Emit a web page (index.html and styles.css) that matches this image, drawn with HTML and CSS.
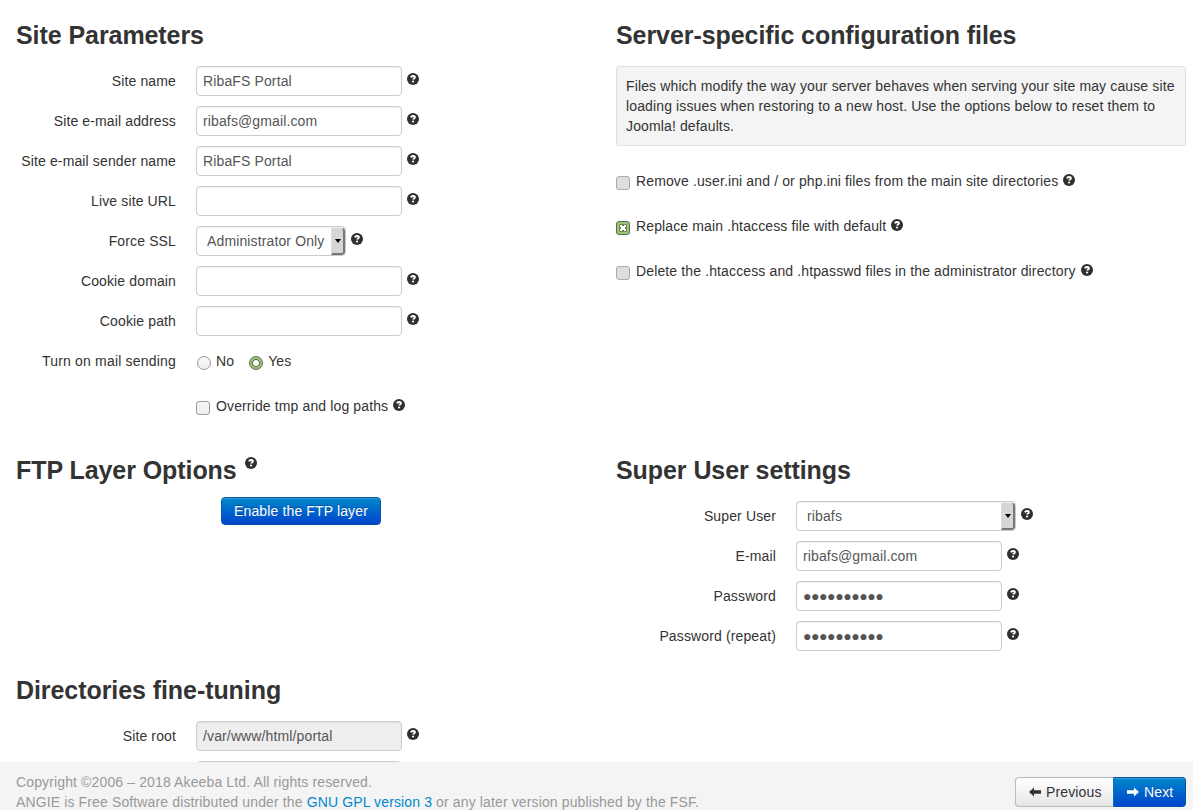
FILE: index.html
```html
<!DOCTYPE html>
<html lang="en">
<head>
<meta charset="utf-8">
<title>Site Parameters</title>
<link rel="stylesheet" href="styles.css">
</head>
<body>
<svg class="defs" aria-hidden="true">
  <symbol id="help" viewBox="0 0 12 12">
    <circle cx="6" cy="6" r="6" fill="#2f2f2f"/>
    <path d="M3.9 4.4C4.3 3.4 5 3 6 3c1.2 0 1.9.5 1.9 1.3 0 1.1-1.7 1.2-1.7 2.3" fill="none" stroke="#fff" stroke-width="1.9"/>
    <rect x="5" y="7.7" width="2.1" height="1.6" fill="#fff"/>
  </symbol>
</svg>
<main class="page">
  <section class="site">
    <h3>Site Parameters</h3>
    <div class="row"><label>Site name</label><div class="input">RibaFS Portal</div><svg class="help"><use href="#help"/></svg></div>
    <div class="row"><label>Site e-mail address</label><div class="input">ribafs@gmail.com</div><svg class="help"><use href="#help"/></svg></div>
    <div class="row"><label>Site e-mail sender name</label><div class="input">RibaFS Portal</div><svg class="help"><use href="#help"/></svg></div>
    <div class="row"><label>Live site URL</label><div class="input"></div><svg class="help"><use href="#help"/></svg></div>
    <div class="row"><label>Force SSL</label><div class="select ssl"><span>Administrator Only</span><i class="arrow"></i></div><svg class="help"><use href="#help"/></svg></div>
    <div class="row"><label>Cookie domain</label><div class="input"></div><svg class="help"><use href="#help"/></svg></div>
    <div class="row"><label>Cookie path</label><div class="input"></div><svg class="help"><use href="#help"/></svg></div>
    <div class="row"><label class="mail">Turn on mail sending</label>
      <div class="choice"><i class="radio"></i><span class="no">No</span><i class="radio on"></i><span>Yes</span></div>
    </div>
    <div class="row override"><div class="choice"><i class="check"></i><span>Override tmp and log paths</span><svg class="help"><use href="#help"/></svg></div></div>
  </section>
  <section class="server">
    <h3>Server-specific configuration files</h3>
    <p class="well">Files which modify the way your server behaves when serving your site may cause site<br>loading issues when restoring to a new host. Use the options below to reset them to<br>Joomla! defaults.</p>
    <div class="choice"><i class="check off"></i><span>Remove .user.ini and / or php.ini files from the main site directories</span><svg class="help"><use href="#help"/></svg></div>
    <div class="choice"><i class="check on"><svg viewBox="0 0 14 14"><path d="M3.5 3.5h7v7h-7z" fill="#fff" stroke="#6c8a55"/><path d="M6 4h2v1H6zM6 9h2v1H6zM4 6h1v2H4zM9 6h1v2H9z" fill="#5f7d4a"/></svg></i><span>Replace main .htaccess file with default</span><svg class="help"><use href="#help"/></svg></div>
    <div class="choice"><i class="check off"></i><span>Delete the .htaccess and .htpasswd files in the administrator directory</span><svg class="help"><use href="#help"/></svg></div>
  </section>
  <section>
    <h3 class="h-ftp"><span>FTP Layer Options</span><svg class="help"><use href="#help"/></svg></h3>
    <button class="enable">Enable the FTP layer</button>
  </section>
  <section>
    <h3>Super User settings</h3>
    <div class="row"><label>Super User</label><div class="select user"><span>ribafs</span><i class="arrow"></i></div><svg class="help"><use href="#help"/></svg></div>
    <div class="row"><label>E-mail</label><div class="input">ribafs@gmail.com</div><svg class="help"><use href="#help"/></svg></div>
    <div class="row"><label>Password</label><div class="input dots">●●●●●●●●●●</div><svg class="help"><use href="#help"/></svg></div>
    <div class="row"><label>Password (repeat)</label><div class="input dots">●●●●●●●●●●</div><svg class="help"><use href="#help"/></svg></div>
  </section>
  <section>
    <h3>Directories fine-tuning</h3>
    <div class="row"><label>Site root</label><div class="input disabled">/var/www/html/portal</div><svg class="help"><use href="#help"/></svg></div>
    <div class="row"><label></label><div class="input"></div></div>
  </section>
</main>
<footer class="footer">
  <div class="legal"><div><span>Copyright ©2006 – 2018 Akeeba Ltd. All rights reserved.</span></div><div><span>ANGIE is Free Software distributed under the <a>GNU GPL version 3</a> or any later version published by the FSF.</span></div></div>
  <div class="nav">
    <button class="prev"><svg viewBox="0 0 12 10"><path d="M0 5l5-4.5V3.2h7v3.6H5v2.7z" fill="#333"/></svg><span>Previous</span></button>
    <button class="next"><svg viewBox="0 0 12 10"><path d="M12 5L7 .5V3.2H0v3.6h7v2.7z" fill="#fff"/></svg><span>Next</span></button>
  </div>
</footer>
</body>
</html>
```
FILE: styles.css
```css
* { box-sizing: border-box; }
html, body { height: 100%; }
body { margin: 0; overflow: hidden; background: #fff; color: #333; font: 14px/20px "Liberation Sans", Arial, sans-serif; letter-spacing: .13px; display: flex; flex-direction: column; }
.defs { display: none; }
.page { flex: 1; min-height: 0; overflow: hidden; padding: 15px 7px 0 16px; display: grid; grid-template-columns: 570px 570px; column-gap: 30px; grid-template-rows: 435px 220px 120px; }
h3 { margin: 0 0 11px; font-size: 25px; line-height: 40px; font-weight: bold; letter-spacing: -.07px; white-space: nowrap; }
.h-ftp { display: flex; gap: 8px; margin-bottom: 7px; }
.row { display: flex; height: 30px; margin-bottom: 10px; }
label { width: 160px; margin-right: 20px; padding-top: 5px; text-align: right; white-space: nowrap; }
.mail { letter-spacing: .19px; }
.input, .select { height: 30px; border: 1px solid #ccc; border-radius: 4px; color: #555; background: #fff; box-shadow: inset 0 1px 1px rgba(0,0,0,.075); white-space: nowrap; }
.input { width: 206px; padding: 4px 6px; }
.dots { letter-spacing: -.42px; }
.disabled { background: #eee; }
.select { display: flex; justify-content: space-between; padding-left: 10px; overflow: hidden; line-height: 28px; }
.ssl { width: 150px; }
.user { width: 220px; }
.arrow { width: 14px; height: 27px; margin-top: 1px; background: #d6d6d6; border-right: 2px solid #777; border-bottom: 2px solid #777; border-left: 1px solid #ddd; border-radius: 0 3px 3px 0; display: flex; align-items: center; justify-content: center; }
.arrow::after { content: ""; margin-top: 1px; border: 3px solid transparent; border-top: 4px solid #000; border-bottom: 0; }
.help { width: 12px; height: 12px; flex: none; margin: 7px 0 0 5px; }
.h-ftp .help { margin: 7px 0 0; }
.choice { display: flex; height: 20px; white-space: nowrap; }
.row .choice { margin-top: 5px; }
.choice .help { margin-top: 3px; }
.override { padding-left: 180px; margin-top: 20px; }
.override .choice { margin-top: 0; }
.radio, .check { width: 14px; height: 14px; margin: 5px 6px 0 0; border: 1px solid #999; background: linear-gradient(#f8f8f8, #eee); flex: none; }
.check { border-radius: 3px; }
.row .radio { border-radius: 50%; margin: 5px 5px 0 1px; }
.no { margin-right: 14px; }
.radio.on { border-color: #5b6e4b; background: radial-gradient(circle, #fff 0 2.7px, #60794a 3.2px 3.7px, #9fc17e 4.3px); }
.check.off { background: #dedede; border-color: #aaa; }
.check.on { background: #a0c37e; border-color: #596c4b; }
.check.on svg { display: block; width: 14px; height: 14px; margin: -1px; }
.well { margin: 0 0 25px; height: 80px; padding: 9px; border: 1px solid #e0e0e0; border-radius: 3px; background: #f4f4f4; white-space: nowrap; }
.server .choice { margin-bottom: 25px; }
button { font: inherit; letter-spacing: inherit; margin: 0; }
.enable { display: block; width: 160px; height: 28px; padding: 0; margin-left: 205px; border: 1px solid #05a; border-radius: 4px; color: #fff; background: linear-gradient(#08c, #04c); box-shadow: inset 0 1px 0 rgba(255,255,255,.2); text-shadow: 0 -1px 0 rgba(0,0,0,.25); }
.footer { height: 48px; flex: none; background: #f4f4f4; color: #999; display: flex; justify-content: space-between; padding: 10px 7px 0 16px; white-space: nowrap; }
a { color: #08c; }
.nav { display: flex; margin-top: 5px; height: 30px; }
.nav button { height: 30px; display: flex; align-items: center; gap: 5px; padding: 0 0 0 13px; }
.nav svg { width: 12px; height: 10px; }
.prev { width: 98px; border: 1px solid #bbb; border-right: 0; border-radius: 4px 0 0 4px; background: linear-gradient(#fff, #e6e6e6); color: #333; }
.next { width: 73px; border: 1px solid #05a; border-left-color: #07b; border-radius: 0 4px 4px 0; background: linear-gradient(#08c, #04c); color: #fff; box-shadow: inset 0 1px 0 rgba(255,255,255,.2); text-shadow: 0 -1px 0 rgba(0,0,0,.25); }
```
